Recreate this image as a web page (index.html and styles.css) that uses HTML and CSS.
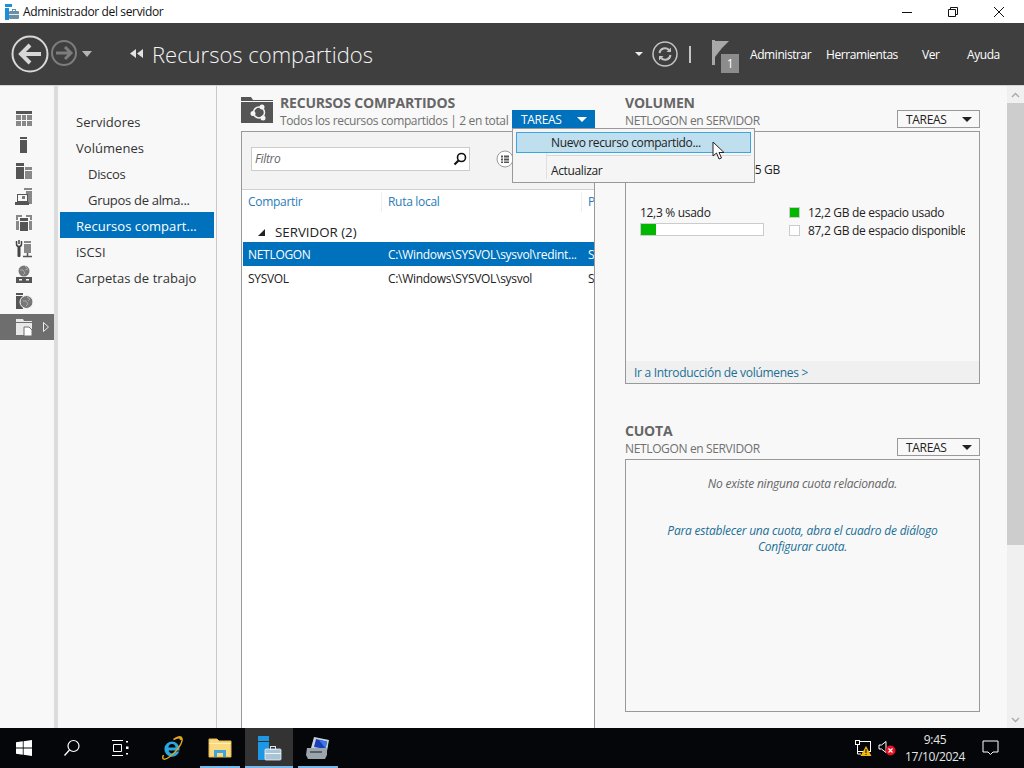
FILE: index.html
```html
<!DOCTYPE html>
<html lang="es">
<head>
    <meta charset="UTF-8">
    <title>Administrador del servidor</title>
    <link rel="stylesheet" href="styles.css">
</head>
<body>
    <!-- Title bar -->
    <div class="titlebar">
        <svg class="app-icon" width="18" height="18" viewBox="0 0 18 18">
            <rect x="3" y="1" width="7" height="3" fill="#1c8fd6"/>
            <rect x="3" y="5" width="4" height="12" fill="#1c8fd6"/>
            <rect x="7" y="8" width="10" height="8" rx="1" fill="#6c8ea6"/>
            <rect x="10.500" y="6.500" width="3" height="2" fill="none" stroke="#6c8ea6"/>
            <rect x="7" y="11" width="10" height="1" fill="#e6eef3"/>
        </svg>
        <span class="app-title">Administrador del servidor</span>
        <div class="win-controls">
            <svg width="12" height="12" viewBox="0 0 12 12"><path d="M1 6.500H11" stroke="#111" fill="none"/></svg>
            <svg width="12" height="12" viewBox="0 0 12 12"><path d="M1.500 3.500h7v7h-7zM3.500 3.500v-2h7v7h-2" stroke="#111" fill="none"/></svg>
            <svg width="12" height="12" viewBox="0 0 12 12"><path d="M1 1L11 11M11 1L1 11" stroke="#111" fill="none"/></svg>
        </div>
    </div>

    <!-- Dark header -->
    <header class="header">
        <svg class="nav-arrows" width="94" height="40" viewBox="0 0 94 40">
            <circle cx="19" cy="20" r="17.500" fill="none" stroke="#d8d8d8" stroke-width="2"/>
            <path d="M30 20H11M19 11l-9 9 9 9" fill="none" stroke="#d8d8d8" stroke-width="4"/>
            <circle cx="53" cy="19" r="12" fill="none" stroke="#7d7d7d" stroke-width="2"/>
            <path d="M45 19H60M54 13l6 6-6 6" fill="none" stroke="#7d7d7d" stroke-width="3"/>
            <path d="M71 17h10l-5 6z" fill="#b5b5b5"/>
        </svg>
        <svg class="crumb" width="14" height="10" viewBox="0 0 14 10"><path d="M6 0v9L0 4.500zM13 0v9L7 4.500z" fill="#e2e2e2"/></svg>
        <span class="page-title">Recursos compartidos</span>
        <div class="header-right">
            <svg class="hdr-caret" width="8" height="6" viewBox="0 0 8 6"><path d="M0 1h8L4 5z" fill="#eee"/></svg>
            <svg class="hdr-refresh" width="26" height="26" viewBox="0 0 26 26">
                <circle cx="13" cy="13" r="12" fill="none" stroke="#c4c4c4" stroke-width="1.500"/>
                <path d="M7.500 12a5.500 5.500 0 0 1 9.500-3l1.500 1.500M18.500 14a5.500 5.500 0 0 1-9.500 3L7.500 15.500" fill="none" stroke="#c4c4c4" stroke-width="2"/>
                <path d="M19 6.500v4.500h-4.500zM7 19.500V15h4.500z" fill="#c4c4c4"/>
            </svg>
            <span class="hdr-sep"></span>
            <div class="flag">
                <svg width="18" height="25" viewBox="0 0 18 25">
                    <rect x="0" y="0" width="3" height="25" fill="#a8a8a8"/>
                    <path d="M3 1H17L10 8 3 17z" fill="#a8a8a8"/>
                </svg>
                <span class="flag-badge">1</span>
            </div>
            <nav class="hdr-menu">
                <span class="m-admin">Administrar</span>
                <span class="m-tools">Herramientas</span>
                <span class="m-ver">Ver</span>
                <span class="m-help">Ayuda</span>
            </nav>
        </div>
    </header>

    <div class="main">
        <!-- Icon rail -->
        <aside class="rail">
            <div class="rail-item">
                <svg width="24" height="24" viewBox="0 0 24 24"><rect x="4" y="4" width="16" height="3" fill="#555"/><path d="M4 8h5v5H4zM10 8h4v5h-4zM15 8h5v5h-5zM4 14h5v5H4zM10 14h4v5h-4zM15 14h5v5h-5z" fill="#888"/></svg>
            </div>
            <div class="rail-item">
                <svg width="24" height="24" viewBox="0 0 24 24"><rect x="8" y="4" width="7" height="2" fill="#555"/><rect x="8" y="7" width="7" height="13" fill="#555"/></svg>
            </div>
            <div class="rail-item">
                <svg width="24" height="24" viewBox="0 0 24 24"><rect x="4" y="4" width="8" height="3" fill="#555"/><rect x="4" y="8" width="8" height="12" fill="#555"/><rect x="13" y="8" width="7" height="3" fill="#888"/><rect x="13" y="12" width="7" height="8" fill="#888"/></svg>
            </div>
            <div class="rail-item">
                <svg width="24" height="24" viewBox="0 0 24 24"><rect x="12" y="3" width="8" height="2" fill="#888"/><rect x="14" y="6" width="6" height="13" fill="#888"/><rect x="5.500" y="9.500" width="10" height="7" fill="#f8f8f8" stroke="#555"/><rect x="3" y="17" width="14" height="3" fill="#555"/><rect x="10" y="11" width="3" height="3" fill="#777"/></svg>
            </div>
            <div class="rail-item">
                <svg width="24" height="24" viewBox="0 0 24 24"><path d="M4 4h6v2H6v3H4zM14 4h6v5h-2V6h-4z" fill="#888"/><rect x="8" y="7" width="8" height="13" fill="#555"/><rect x="8" y="10" width="8" height="1" fill="#f8f8f8"/><rect x="4" y="10" width="3" height="9" fill="#888"/><rect x="17" y="10" width="3" height="9" fill="#888"/></svg>
            </div>
            <div class="rail-item">
                <svg width="24" height="24" viewBox="0 0 24 24"><path d="M7 3v4M4.500 4v3a2.500 2.500 0 0 0 5 0V4" fill="none" stroke="#444" stroke-width="1.500"/><rect x="5.500" y="9" width="3" height="11" rx="1" fill="#444"/><rect x="12" y="4" width="7" height="2" fill="#888"/><rect x="12" y="7" width="7" height="9" fill="#888"/><path d="M15.500 16v3M11 19.500h9" stroke="#555" stroke-width="1.500"/></svg>
            </div>
            <div class="rail-item">
                <svg width="24" height="24" viewBox="0 0 24 24"><circle cx="12" cy="8" r="5.500" fill="#777"/><path d="M8 7h3l2 3-2 2M13 3l3 3-3 1" fill="none" stroke="#aaa"/><rect x="4" y="14" width="16" height="6" fill="#555"/><rect x="7" y="16" width="3" height="1.500" fill="#f8f8f8"/><rect x="14" y="16" width="3" height="1.500" fill="#f8f8f8"/></svg>
            </div>
            <div class="rail-item">
                <svg width="24" height="24" viewBox="0 0 24 24"><rect x="4" y="4" width="7" height="2" fill="#555"/><rect x="4" y="7" width="7" height="13" fill="#555"/><circle cx="14.500" cy="13" r="6.500" fill="#777" stroke="#f8f8f8"/><path d="M11 12h3l2 3-2 2M15 8l3 2-2 2" fill="none" stroke="#aaa"/></svg>
            </div>
            <div class="rail-item rail-active">
                <svg width="24" height="24" viewBox="0 0 24 24"><path d="M4 4h7l1 2h8v8h-8v6H4z" fill="#e8e8e8"/><rect x="4" y="7" width="16" height="1" fill="#6e6e6e"/><path d="M12 12h5l3 3v6h-8z" fill="#fff" stroke="#6e6e6e"/></svg>
                <svg class="rail-arrow" width="8" height="12" viewBox="0 0 8 12"><path d="M1.500 1.500L6.500 6l-5 4.500z" fill="none" stroke="#eee"/></svg>
            </div>
        </aside>
        <div class="splitter"></div>

        <!-- Section list -->
        <nav class="sections">
            <a class="sec">Servidores</a>
            <a class="sec">Volúmenes</a>
            <a class="sec sub">Discos</a>
            <a class="sec sub">Grupos de alma...</a>
            <a class="sec selected">Recursos compart...</a>
            <a class="sec">iSCSI</a>
            <a class="sec">Carpetas de trabajo</a>
        </nav>

        <!-- Content -->
        <section class="content">
            <div class="tile tile-shares">
                <div class="tile-head">
                    <svg class="share-icon" width="32" height="27" viewBox="0 0 32 27">
                        <path d="M0 0h10l2 3h20v23H0z" fill="#555"/>
                        <rect x="0" y="4" width="32" height="1" fill="#f8f8f8"/>
                        <circle cx="18" cy="15.500" r="5.500" fill="none" stroke="#f4f4f4" stroke-width="1.500"/>
                        <circle cx="21" cy="10" r="2.500" fill="#f4f4f4"/>
                        <circle cx="12" cy="16.500" r="2.500" fill="#f4f4f4"/>
                        <circle cx="22" cy="21" r="2.500" fill="#f4f4f4"/>
                    </svg>
                    <div class="head-text">
                        <h2>RECURSOS COMPARTIDOS</h2>
                        <p>Todos los recursos compartidos | 2 en total</p>
                    </div>
                    <button class="tasks tasks-open">TAREAS<i class="caret"></i></button>
                </div>
                <div class="panel shares-panel">
                    <div class="toolbar">
                        <div class="filter">
                            <span>Filtro</span>
                            <svg width="16" height="16" viewBox="0 0 16 16"><circle cx="9.500" cy="6.500" r="4" fill="none" stroke="#111" stroke-width="1.600"/><path d="M6.500 9.500L2.500 13.500" stroke="#111" stroke-width="2.200"/></svg>
                        </div>
                        <svg class="view-btn" width="18" height="18" viewBox="0 0 18 18"><circle cx="9" cy="9" r="8" fill="#fff" stroke="#9a9a9a"/><path d="M5 5.500h2v2H5zM8 5.500h5v2H8zM5 8.500h2v2H5zM8 8.500h5v2H8zM5 11.500h2v1.500H5zM8 11.500h5v1.500H8z" fill="#555"/></svg>
                    </div>
                    <div class="list-head">
                        <span class="col-share">Compartir</span>
                        <span class="col-path">Ruta local</span>
                        <span class="col-proto">P</span>
                    </div>
                    <div class="group"><i class="tri"></i>SERVIDOR (2)</div>
                    <div class="row row-selected">
                        <span class="col-share">NETLOGON</span>
                        <span class="col-path">C:\Windows\SYSVOL\sysvol\redint...</span>
                        <span class="col-proto">S</span>
                    </div>
                    <div class="row">
                        <span class="col-share">SYSVOL</span>
                        <span class="col-path">C:\Windows\SYSVOL\sysvol</span>
                        <span class="col-proto">S</span>
                    </div>
                </div>
            </div>

            <div class="side">
                <div class="tile">
                    <div class="tile-head">
                        <div class="head-text">
                            <h2>VOLUMEN</h2>
                            <p>NETLOGON en SERVIDOR</p>
                        </div>
                        <button class="tasks">TAREAS<i class="caret"></i></button>
                    </div>
                    <div class="panel side-panel volume-panel">
                        <div class="vol-body">
                            <div class="vol-cap"><span>Capacidad:</span><span>99,5 GB</span></div>
                            <div class="usage">
                                <div class="usage-left">
                                    <div>12,3 % usado</div>
                                    <div class="bar"><div class="bar-fill" style="width: 12.3%"></div></div>
                                </div>
                                <div class="legend">
                                    <div class="leg-row"><i class="swatch swatch-used"></i>12,2 GB de espacio usado</div>
                                    <div class="leg-row"><i class="swatch"></i>87,2 GB de espacio disponible</div>
                                </div>
                            </div>
                        </div>
                        <div class="vol-foot">Ir a Introducción de volúmenes &gt;</div>
                    </div>
                </div>

                <div class="tile tile-quota">
                    <div class="tile-head">
                        <div class="head-text">
                            <h2>CUOTA</h2>
                            <p>NETLOGON en SERVIDOR</p>
                        </div>
                        <button class="tasks">TAREAS<i class="caret"></i></button>
                    </div>
                    <div class="panel side-panel quota-panel">
                        <p class="quota-none">No existe ninguna cuota relacionada.</p>
                        <p class="quota-link">Para establecer una cuota, abra el cuadro de diálogo<br>Configurar cuota.</p>
                    </div>
                </div>
            </div>

            <!-- Open tasks menu -->
            <div class="menu">
                <div class="menu-item menu-hover">Nuevo recurso compartido...</div>
                <div class="menu-sep"></div>
                <div class="menu-item menu-last">Actualizar</div>
            </div>
            <svg class="cursor" width="14" height="20" viewBox="0 0 14 20"><path d="M1 1V15L4.500 12 7 18 9.500 17 7 11.500H12z" fill="#fff" stroke="#222"/></svg>
        </section>

        <!-- Scrollbar -->
        <div class="scrollbar">
            <div class="sb-btn"><svg width="9" height="6" viewBox="0 0 9 6"><path d="M1 5l3.500-3.500L8 5" fill="none" stroke="#a8a8a8" stroke-width="1.300"/></svg></div>
            <div class="sb-thumb"></div>
            <div class="sb-track"></div>
            <div class="sb-btn"><svg width="9" height="6" viewBox="0 0 9 6"><path d="M1 1l3.500 3.500L8 1" fill="none" stroke="#a8a8a8" stroke-width="1.300"/></svg></div>
        </div>
    </div>

    <!-- Taskbar -->
    <footer class="taskbar">
        <div class="tb-btn">
            <svg width="16" height="16" viewBox="0 0 16 16"><path d="M0 2.300L6.800 1.300V7.600H0zM7.600 1.200L16 0V7.600H7.600zM0 8.400H6.800V14.700L0 13.700zM7.600 8.400H16V16L7.600 14.800z" fill="#fff"/></svg>
        </div>
        <div class="tb-btn">
            <svg width="18" height="18" viewBox="0 0 18 18"><circle cx="10.500" cy="7" r="5.500" fill="none" stroke="#fff" stroke-width="1.200"/><path d="M6.500 11L1.500 16.500" stroke="#fff" stroke-width="1.300"/></svg>
        </div>
        <div class="tb-btn">
            <svg width="18" height="16" viewBox="0 0 18 16"><path d="M1 .5H12M1 15.500H12M2.500 4.500h8v7h-8z" fill="none" stroke="#fff"/><path d="M15 1h2v1.500h-2zM15 6.500h2.500v2.500H15zM15 13h2v1.500h-2z" fill="#fff"/></svg>
        </div>
        <div class="tb-btn tb-ie">
            <svg width="26" height="26" viewBox="0 0 26 26">
                <path d="M13 6.500a7.500 7.500 0 0 1 7.500 7.500v1.500H9.500a3.800 3.800 0 0 0 7 1h3.700a7.600 7.600 0 1 1-7.200-10zM9.500 12.500h7a3.500 3.500 0 0 0-7 0z" fill="#2aa6e0"/>
                <path d="M4.500 20C2 25 6 25.500 11 21.500 18 16 24 8 23 3.500 22 .5 17.500 2 14.500 4.500 19 2 22 2 21.500 5" fill="none" stroke="#e0a61c" stroke-width="1.500"/>
            </svg>
        </div>
        <div class="tb-btn tb-open">
            <svg width="24" height="20" viewBox="0 0 24 20">
                <path d="M1 1h8l2 2h12v16H1z" fill="#fbd97e" stroke="#e3b64e"/>
                <rect x="1" y="5" width="22" height="1" fill="#fdeebb"/>
                <path d="M6 19v-7h12v7h-3v-4H9v4z" fill="#3ea4e2"/>
            </svg>
        </div>
        <div class="tb-btn tb-open tb-active">
            <svg width="26" height="26" viewBox="0 0 26 26">
                <rect x="2" y="1" width="11" height="5" fill="#1e98e4"/>
                <rect x="2" y="7" width="11" height="18" fill="#1e98e4"/>
                <rect x="9" y="14" width="16" height="11" rx="1" fill="#a9c4d6" stroke="#eaf2f7" stroke-width=".8"/>
                <rect x="14.500" y="11.500" width="5" height="3" fill="none" stroke="#dbe6ee"/>
                <rect x="9" y="18" width="16" height="1" fill="#eef4f8"/>
            </svg>
        </div>
        <div class="tb-btn tb-open tb-last">
            <svg width="26" height="26" viewBox="0 0 26 26">
                <path d="M9 2L24 5 22 16 6 13z" fill="#c9d3dc"/>
                <path d="M11 4L22 6.500 20.500 14 9 12z" fill="#1b3fb8"/>
                <path d="M14 5l8 1.500-1.500 7z" fill="#3c79e8"/>
                <path d="M2 13h20v7l-2 4H3l-2-4z" fill="#9aa5ad"/>
                <rect x="5" y="16" width="12" height="2" fill="#596268"/>
            </svg>
        </div>
        <div class="tray">
            <svg width="18" height="18" viewBox="0 0 18 18">
                <rect x="3.500" y="2.500" width="13" height="10" fill="none" stroke="#fff"/>
                <rect x="1.500" y="1.500" width="4" height="4" fill="#000" stroke="#fff"/>
                <path d="M3.500 6v9H7" fill="none" stroke="#fff"/>
                <path d="M12 7l5.500 10h-11z" fill="#f2b90c"/>
                <rect x="11.500" y="10" width="1" height="4" fill="#000"/>
                <rect x="11.500" y="15" width="1" height="1" fill="#000"/>
            </svg>
            <svg class="tray-vol" width="18" height="16" viewBox="0 0 18 16">
                <path d="M1 5h2.500L8 1.500v11L3.500 9H1z" fill="none" stroke="#fff"/>
                <circle cx="12.500" cy="10.500" r="5" fill="#e81123"/>
                <path d="M10.500 8.500l4 4M14.500 8.500l-4 4" stroke="#fff" stroke-width="1.200"/>
            </svg>
            <div class="clock"><span>9:45</span><span>17/10/2024</span></div>
            <svg class="tray-note" width="17" height="16" viewBox="0 0 17 16"><path d="M1 1H16V12H11L8.500 14.500 6 12H1z" fill="none" stroke="#fff"/></svg>
        </div>
    </footer>
</body>
</html>
```

FILE: styles.css
```css
/* Global Reset */
* {
    margin: 0;
    padding: 0;
    box-sizing: border-box;
}

body {
    width: 1024px;
    height: 768px;
    overflow: hidden;
    display: flex;
    flex-direction: column;
    font-family: 'Open Sans', 'Noto Sans', sans-serif;
    font-size: 12px;
    letter-spacing: -0.3px;
    color: #222;
    background: #f8f8f8;
}

/* Title bar */
.titlebar {
    height: 23px;
    background: #fff;
    display: flex;
    align-items: center;
    padding-left: 2px;
    flex-shrink: 0;
}

.app-title {
    margin-left: 3px;
    color: #111;
    letter-spacing: -0.36px;
}

.win-controls {
    margin-left: auto;
    display: flex;
    gap: 34px;
    padding-right: 19px;
}

/* Header */
.header {
    height: 63px;
    background: #3f3f3f;
    border-bottom: 1px solid #d4d4d4;
    display: flex;
    align-items: center;
    flex-shrink: 0;
    color: #fff;
    padding-left: 11px;
}

.crumb {
    margin-left: 25px;
}

.page-title {
    margin-left: 8px;
    font-size: 22px;
    font-weight: 300;
    letter-spacing: 0;
    color: #f4f4f4;
}

.header-right {
    margin-left: auto;
    display: flex;
    align-items: center;
}

.hdr-refresh {
    margin-left: 9px;
}

.hdr-sep {
    width: 2px;
    height: 17px;
    background: #c4c4c4;
    margin-left: 11px;
}

.flag {
    position: relative;
    width: 28px;
    height: 30px;
    margin-left: 21px;
    padding-top: 1px;
}

.flag-badge {
    position: absolute;
    left: 9px;
    top: 15px;
    width: 18px;
    height: 19px;
    background: #8c8c8c;
    font-size: 12px;
    text-align: center;
    line-height: 19px;
}

.hdr-menu {
    display: flex;
    margin-left: 10px;
    width: 274px;
    letter-spacing: -0.42px;
}

.m-admin { width: 76px; }
.m-tools { width: 96px; }
.m-ver { width: 45px; }

/* Main area */
.main {
    flex: 1;
    display: flex;
    min-height: 0;
}

.rail {
    width: 54px;
    padding-top: 20px;
    background: #f8f8f8;
    flex-shrink: 0;
}

.rail-item {
    height: 26px;
    display: flex;
    align-items: center;
    padding-left: 12px;
    position: relative;
}

.rail-active {
    background: #6e6e6e;
}

.rail-arrow {
    position: absolute;
    right: 4px;
    top: 7px;
}

.splitter {
    width: 4px;
    background: #dcdcdc;
    flex-shrink: 0;
}

.sections {
    width: 159px;
    padding: 22px 2px 0;
    border-right: 1px solid #c8c8c8;
    flex-shrink: 0;
    font-size: 13px;
    letter-spacing: 0.05px;
}

.sec {
    display: block;
    height: 26px;
    line-height: 28px;
    padding-left: 16px;
    color: #333;
    white-space: nowrap;
    width: 154px;
}

.sec.sub {
    padding-left: 28px;
    letter-spacing: -0.3px;
}

.sec.selected {
    background: #0071bc;
    color: #fff;
}

/* Content */
.content {
    flex: 1;
    position: relative;
    display: flex;
    gap: 30px;
    padding: 10px 0 0 24px;
    overflow: hidden;
    min-width: 0;
}

.tile {
    display: flex;
    flex-direction: column;
}

.tile-shares {
    width: 354px;
    height: 660px;
}

.side {
    width: 355px;
}

.tile-quota {
    margin-top: 40px;
}

.tile-head {
    height: 35px;
    display: flex;
    align-items: flex-start;
    flex-shrink: 0;
    position: relative;
}

.share-icon {
    margin: 1px 7px 0 0;
}

.head-text h2 {
    font-size: 14px;
    line-height: 14px;
    font-weight: 700;
    color: #666;
    letter-spacing: -0.2px;
}

.head-text p {
    line-height: 16px;
    margin-top: 3px;
    color: #707070;
    letter-spacing: -0.36px;
}

.tasks {
    position: absolute;
    right: 0;
    top: 14px;
    width: 83px;
    height: 18px;
    border: 1px solid #999;
    background: #f8f8f8;
    font: inherit;
    letter-spacing: inherit;
    color: #222;
    text-align: left;
    padding-left: 8px;
}

.tasks-open {
    background: #0071bc;
    border-color: #0071bc;
    color: #fff;
}

.caret {
    position: absolute;
    right: 7px;
    top: 6px;
    border-left: 5px solid transparent;
    border-right: 5px solid transparent;
    border-top: 5px solid #222;
}

.tasks-open .caret {
    border-top-color: #fff;
}

.panel {
    border: 1px solid #999;
    background: #f8f8f8;
}

.shares-panel {
    flex: 1;
    background: #fff;
}

/* Shares list */
.toolbar {
    height: 58px;
    background: #f3f3f3;
    border-bottom: 1px solid #d0d0d0;
    display: flex;
    align-items: center;
    padding: 0 0 4px 9px;
}

.filter {
    width: 219px;
    height: 24px;
    background: #fff;
    border: 1px solid #ccc;
    display: flex;
    align-items: center;
    justify-content: space-between;
    padding: 0 1px 0 3px;
    font-style: italic;
    color: #666;
}

.view-btn {
    margin-left: 26px;
}

.list-head {
    display: flex;
    height: 24px;
    align-items: center;
    color: #2a7bb8;
    line-height: 20px;
    overflow: hidden;
}

.col-share {
    width: 140px;
    padding-left: 6px;
    flex-shrink: 0;
}

.col-path {
    width: 196px;
    padding-left: 6px;
    flex-shrink: 0;
    white-space: nowrap;
}

.col-proto {
    padding-left: 10px;
}

.list-head .col-path {
    width: 201px;
}

.list-head .col-path,
.list-head .col-proto {
    border-left: 1px solid #eee;
    margin-left: -1px;
}

.list-head .col-proto {
    padding-left: 6px;
}

.group {
    height: 28px;
    padding: 8px 0 0 16px;
    font-size: 13.3px;
    color: #222;
    display: flex;
    align-items: center;
    letter-spacing: 0;
}

.tri {
    width: 0;
    height: 0;
    margin-right: 10px;
    border-left: 7px solid transparent;
    border-bottom: 7px solid #222;
}

.row {
    display: flex;
    height: 24px;
    line-height: 24px;
    padding-top: 1px;
    color: #222;
    overflow: hidden;
}

.row-selected {
    background: #0071bc;
    color: #fff;
    margin-left: 1px;
}

.row-selected .col-share {
    width: 139px;
    padding-left: 5px;
}

/* Side tiles */
.side-panel {
    height: 253px;
}

.volume-panel {
    display: flex;
    flex-direction: column;
}

.vol-body {
    flex: 1;
    padding: 29px 0 0 14px;
}

.vol-cap {
    width: 140px;
    display: flex;
    justify-content: space-between;
    line-height: 18px;
}

.usage {
    display: flex;
    margin-top: 25px;
}

.usage-left {
    width: 124px;
    line-height: 18px;
}

.bar {
    height: 13px;
    margin-top: 1px;
    background: #fff;
    border: 1px solid #ccc;
}

.bar-fill {
    height: 100%;
    background: #00b800;
}

.legend {
    width: 176px;
    margin: -1px 0 0 25px;
    overflow: hidden;
}

.leg-row {
    display: flex;
    align-items: center;
    height: 18px;
    white-space: nowrap;
}

.swatch {
    width: 11px;
    height: 11px;
    margin-right: 8px;
    border: 1px solid #ccc;
    background: #fff;
    flex-shrink: 0;
}

.swatch-used {
    background: #00b800;
}

.vol-foot {
    height: 22px;
    line-height: 24px;
    background: #f0f0f0;
    padding-left: 8px;
    color: #1a6f96;
}

.quota-panel {
    text-align: center;
    font-style: italic;
    padding-top: 15px;
    letter-spacing: -0.22px;
}

.quota-none {
    line-height: 18px;
    color: #666;
}

.quota-link {
    margin-top: 30px;
    line-height: 16px;
    color: #1a6f96;
}

/* Tasks menu */
.menu {
    position: absolute;
    left: 295px;
    top: 42px;
    width: 243px;
    height: 55px;
    background: #f5f5f5;
    border: 1px solid #999;
    padding: 3px;
}

.menu::before {
    content: "";
    position: absolute;
    left: 33px;
    top: 3px;
    bottom: 3px;
    border-left: 1px solid #e0e0e0;
}

.menu-item {
    height: 21px;
    line-height: 20px;
    padding-left: 34px;
    position: relative;
    color: #222;
    border: 1px solid transparent;
    letter-spacing: -0.36px;
}

.menu-last {
    line-height: 22px;
}

.menu-hover {
    background: #bfdeee;
    border-color: #3aa6e0;
}

.menu-sep {
    height: 1px;
    margin: 2px 0 3px 30px;
    background: #d8d8d8;
}

.cursor {
    position: absolute;
    left: 495px;
    top: 55px;
}

/* Scrollbar */
.scrollbar {
    width: 17px;
    background: #f0f0f0;
    display: flex;
    flex-direction: column;
    flex-shrink: 0;
}

.sb-btn {
    height: 17px;
    display: flex;
    align-items: center;
    justify-content: center;
}

.sb-thumb {
    height: 442px;
    background: #cdcdcd;
}

.sb-track {
    flex: 1;
}

/* Taskbar */
.taskbar {
    height: 40px;
    background: #05060a;
    display: flex;
    flex-shrink: 0;
    color: #e6e6e6;
}

.tb-btn {
    width: 48px;
    display: flex;
    align-items: center;
    justify-content: center;
    position: relative;
}

.tb-ie {
    width: 52px;
    padding-left: 4px;
}

.tb-open::after {
    content: "";
    position: absolute;
    left: 4px;
    right: 4px;
    bottom: 0;
    height: 2px;
    background: #76b9ed;
}

.tb-active {
    background: #333;
    margin-left: 1px;
}

.tb-active::after {
    left: 0;
    right: 0;
}

.tb-last {
    margin-left: 1px;
}

.tray {
    margin-left: auto;
    display: flex;
    align-items: center;
    padding-right: 25px;
}

.tray-vol {
    margin-left: 6px;
}

.clock {
    display: flex;
    flex-direction: column;
    align-items: center;
    line-height: 17px;
    width: 72px;
    margin-left: 3px;
    font-size: 12px;
    letter-spacing: -0.36px;
}

.tray-note {
    margin-left: 11px;
}
```
